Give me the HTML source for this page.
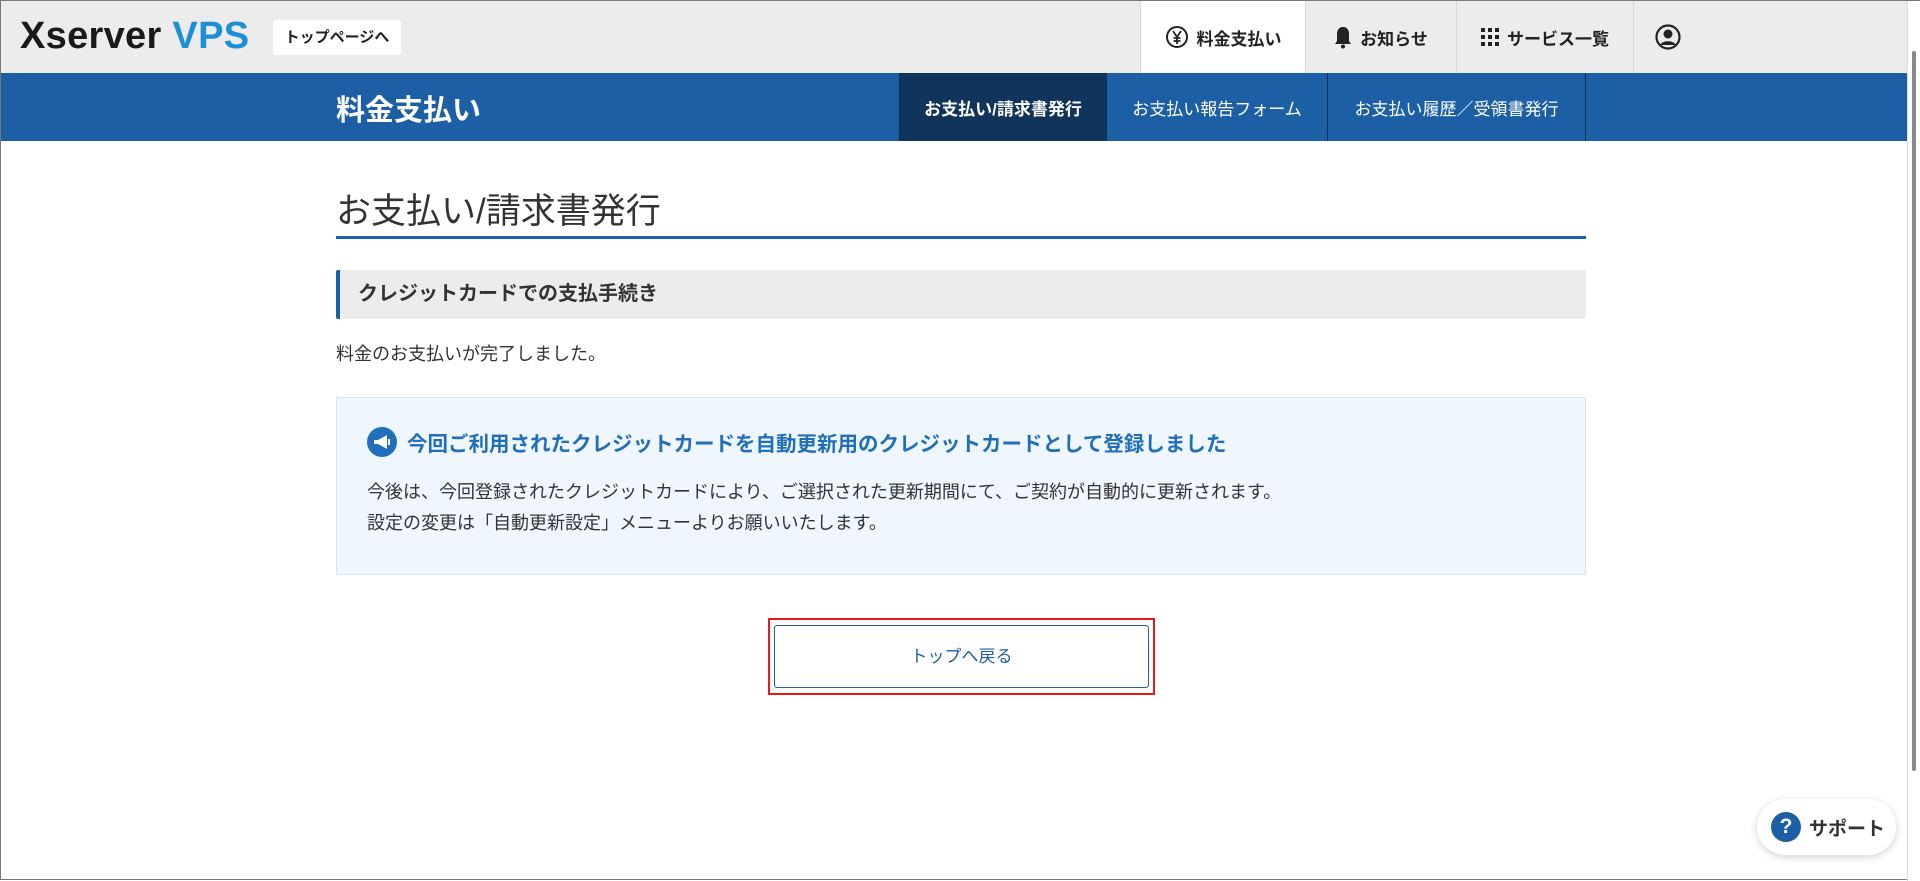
<!DOCTYPE html>
<html><head><meta charset="utf-8"><style>
*{margin:0;padding:0;box-sizing:border-box}
body{width:1920px;height:880px;overflow:hidden;background:#fff;font-family:"Liberation Sans","Noto Sans CJK JP",sans-serif;color:#333;position:relative;border:1px solid #777}
.abs{position:absolute}
.hdr{left:0;top:0;width:1906px;height:72px;background:#ececec}
.logo{left:19px;top:14px;font-size:38px;font-weight:bold;letter-spacing:0.3px;color:#1a1a1a}
.logo span{color:#1d8fd6}
.topbtn{left:272px;top:19px;width:128px;height:35px;background:#fff;border-radius:3px;font-size:15px;font-weight:bold;color:#222;text-align:center;line-height:35px}
.ht{top:0;height:72px;display:flex;align-items:center;justify-content:center;font-size:17px;font-weight:bold;color:#222;border-right:1px solid #d8d8d8;gap:8px}
.nav{left:0;top:72px;width:1906px;height:68px;background:#1c5fa4}
.navt{left:335px;top:86px;font-size:29px;font-weight:bold;color:#fff}
.sub{top:72px;height:68px;display:flex;align-items:center;justify-content:center;font-size:17px;color:#fff;border-right:1px solid #0d2f55}
h1{position:absolute;left:335px;top:182px;font-size:35px;font-weight:normal;color:#333}
.ul{left:335px;top:235px;width:1250px;height:3px;background:#1c5fa4}
.gb{left:335px;top:269px;width:1250px;height:49px;background:#ececec;border-left:4px solid #1c5fa4;border-radius:2px;font-size:20px;font-weight:bold;line-height:49px;padding-left:18px;color:#333}
.p{left:335px;top:339px;font-size:18px}
.info{left:335px;top:396px;width:1250px;height:178px;background:#f0f6fe;border:1px solid #d6e2ee;border-radius:2px}
.ih{left:366px;top:426px;font-size:20.5px;font-weight:bold;color:#1f6fba;display:flex;align-items:center;gap:10px}
.it{left:366px;top:476px;font-size:18px;line-height:31px;color:#333}
.red{left:767px;top:617px;width:387px;height:77px;border:2px solid #e8191c}
.btn{left:773px;top:624px;width:375px;height:63px;border:1px solid #1c5fa4;border-radius:3px;background:#fff;text-align:center;line-height:61px;font-size:17px;color:#1c5fa4}
.sup{left:1756px;top:798px;width:139px;height:56px;background:#fff;border-radius:28px;box-shadow:0 2px 8px rgba(0,0,0,.18);display:flex;align-items:center;padding-left:14px;gap:8px;font-size:19px;font-weight:bold;color:#333}
.q{width:30px;height:30px;border-radius:50%;background:#1c5fa4;color:#fff;text-align:center;line-height:30px;font-size:21px;font-weight:bold}
.sb{left:1906px;top:0;width:14px;height:880px;background:#fff;border-left:1px solid #ddd}
.sbt{left:1911px;top:50px;width:4px;height:720px;background:#888;border-radius:2px}
</style></head><body>
<div class="abs hdr"></div>
<div class="abs logo">Xserver <span>VPS</span></div>
<div class="abs topbtn">トップページへ</div>
<div class="abs ht" style="left:1139px;width:166px;background:#fff;border-left:1px solid #d8d8d8"><svg width="24" height="24" viewBox="0 0 24 24"><circle cx="12" cy="12" r="10" fill="none" stroke="#222" stroke-width="2"/><path d="M8 6l4 6 4-6M12 12v7M8.5 13h7M8.5 16h7" stroke="#222" stroke-width="1.8" fill="none"/></svg>料金支払い</div>
<div class="abs ht" style="left:1305px;width:151px"><svg width="18" height="24" viewBox="0 0 18 24"><path d="M9 2c-4 0-6 3-6 7v7l-2 3h16l-2-3V9c0-4-2-7-6-7z" fill="#222"/><circle cx="9" cy="21.5" r="2" fill="#222"/></svg>お知らせ</div>
<div class="abs ht" style="left:1456px;width:177px"><svg width="18" height="18" viewBox="0 0 18 18" fill="#222"><rect x="0" y="0" width="4" height="4"/><rect x="7" y="0" width="4" height="4"/><rect x="14" y="0" width="4" height="4"/><rect x="0" y="7" width="4" height="4"/><rect x="7" y="7" width="4" height="4"/><rect x="14" y="7" width="4" height="4"/><rect x="0" y="14" width="4" height="4"/><rect x="7" y="14" width="4" height="4"/><rect x="14" y="14" width="4" height="4"/></svg>サービス一覧</div>
<div class="abs ht" style="left:1633px;width:68px;border:none"><svg width="26" height="26" viewBox="0 0 26 26"><circle cx="13" cy="13" r="11.5" fill="none" stroke="#222" stroke-width="2.2"/><circle cx="13" cy="10" r="4.5" fill="#222"/><path d="M5 21c2-5 14-5 16 0" fill="#222"/></svg></div>
<div class="abs nav"></div>
<div class="abs navt">料金支払い</div>
<div class="abs sub" style="left:898px;width:208px;background:#10345c;font-weight:bold;border-left:1px solid #0d2f55">お支払い/請求書発行</div>
<div class="abs sub" style="left:1106px;width:221px">お支払い報告フォーム</div>
<div class="abs sub" style="left:1327px;width:258px">お支払い履歴／受領書発行</div>
<h1>お支払い/請求書発行</h1>
<div class="abs ul"></div>
<div class="abs gb">クレジットカードでの支払手続き</div>
<div class="abs p">料金のお支払いが完了しました。</div>
<div class="abs info"></div>
<div class="abs ih"><svg width="30" height="30" viewBox="0 0 30 30"><circle cx="15" cy="15" r="15" fill="#1f6fba"/><path d="M7 13h4l9-5v14l-9-5H7z" fill="#fff"/><rect x="21" y="12" width="2" height="6" fill="#fff"/></svg>今回ご利用されたクレジットカードを自動更新用のクレジットカードとして登録しました</div>
<div class="abs it">今後は、今回登録されたクレジットカードにより、ご選択された更新期間にて、ご契約が自動的に更新されます。<br>設定の変更は「自動更新設定」メニューよりお願いいたします。</div>
<div class="abs red"></div>
<div class="abs btn">トップへ戻る</div>
<div class="abs sup"><div class="q">?</div>サポート</div>
<div class="abs sb"></div>
<div class="abs sbt"></div>
</body></html>
